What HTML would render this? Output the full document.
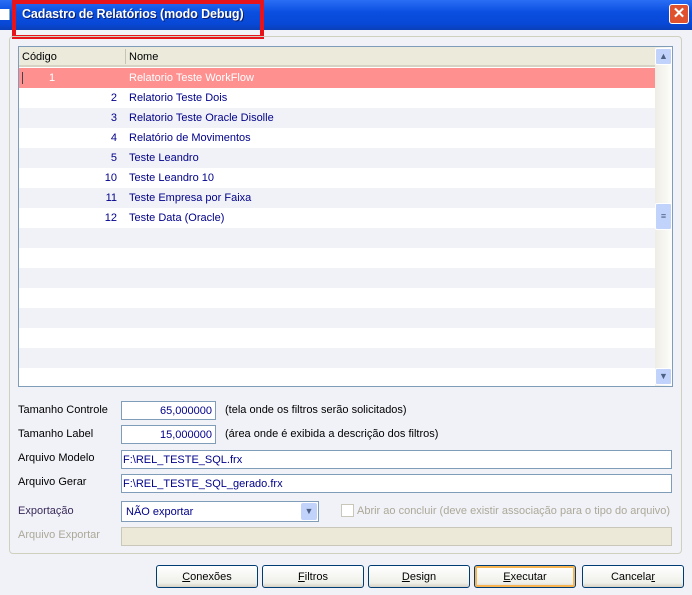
<!DOCTYPE html>
<html><head><meta charset="utf-8"><style>
*{box-sizing:border-box;margin:0;padding:0}
body{width:692px;height:595px;background:#f1f2f7;font-family:"Liberation Sans",sans-serif;font-size:11px;position:relative;overflow:hidden;color:#000;white-space:nowrap}
.abs{position:absolute}
#tb{left:0;top:0;width:692px;height:30px;background:linear-gradient(#2a6ef5,#0a4fe0 40%,#0848d6 80%,#0a3fb8);}
#red{left:12px;top:0;width:252px;height:39px;border:4px solid #e8141c}
#close{left:669px;top:4px;width:20px;height:20px;background:#e0522e;border:1px solid #fff;border-radius:3px;color:#fff;font-size:15px;line-height:18px;text-align:center;font-weight:bold}
#grp{left:9px;top:36px;width:673px;height:518px;border:1px solid #d0d0bf;border-radius:4px}
#list{left:18px;top:46px;width:655px;height:341px;border:1px solid #7f9db9;background:#fff;overflow:hidden}
.hdr{left:0;top:0;width:636px;height:20px;background:#ebeadb;border-bottom:2px solid #d6d3c4}
.row{left:0;width:636px;height:20px;color:#00008a;line-height:20px}
.row .c{position:absolute;right:538px}
.row .n{position:absolute;left:110px}
#sb{left:636px;top:0;width:17px;height:339px;background:linear-gradient(90deg,#eeede5,#fdfdfa)}
.sbtn{left:0;width:17px;height:17px;background:#c2d3fb;border:1px solid #fff;border-radius:2px;color:#4d6185;font-size:9px;text-align:center;line-height:15px}
.inp{position:absolute;height:19px;border:1px solid #7f9db9;background:#fff;color:#00008a;padding:3px 3px 0;line-height:13px}
.lbl{position:absolute;left:18px}
.btn{position:absolute;top:565px;width:102px;height:23px;border:1px solid #003c74;border-radius:3px;background:linear-gradient(#fff,#f0f0ea 80%,#d6d0c5);text-align:center;line-height:22px}
</style></head><body>
<div id="tb" class="abs"><div class="abs" style="left:0;top:9px;width:10px;height:11px;background:#fff;border-right:1px solid #8aa"></div></div>
<div id="close" class="abs">✕</div>
<div id="red" class="abs"></div>
<div class="abs" style="left:22px;top:7px;color:#fff;font-weight:bold;font-size:12.5px;letter-spacing:-0.1px;text-shadow:1px 1px #0a1f6a">Cadastro de Relatórios (modo Debug)</div>
<div id="grp" class="abs"></div>
<div id="list" class="abs">
 <div class="abs hdr"><span class="abs" style="left:3px;top:4px">Código</span><span class="abs" style="left:106px;top:2px;width:1px;height:15px;background:#c7c5b2"></span><span class="abs" style="left:110px;top:4px">Nome</span></div>
 <div class="abs row" style="top:21px;background:#ff9090;color:#fff"><span class="abs" style="left:3px;top:4px;width:1px;height:12px;background:#444"></span><span class="abs" style="left:30px">1</span><span class="n">Relatorio Teste WorkFlow</span></div>
 <div class="abs row" style="top:41px"><span class="c">2</span><span class="n">Relatorio Teste Dois</span></div>
 <div class="abs row" style="top:61px;background:#f1f2f8"><span class="c">3</span><span class="n">Relatorio Teste Oracle Disolle</span></div>
 <div class="abs row" style="top:81px"><span class="c">4</span><span class="n">Relatório de Movimentos</span></div>
 <div class="abs row" style="top:101px;background:#f1f2f8"><span class="c">5</span><span class="n">Teste Leandro</span></div>
 <div class="abs row" style="top:121px"><span class="c">10</span><span class="n">Teste Leandro 10</span></div>
 <div class="abs row" style="top:141px;background:#f1f2f8"><span class="c">11</span><span class="n">Teste Empresa por Faixa</span></div>
 <div class="abs row" style="top:161px"><span class="c">12</span><span class="n">Teste Data (Oracle)</span></div>
 <div class="abs row" style="top:181px;background:#f1f2f8"></div>
 <div class="abs row" style="top:201px"></div>
 <div class="abs row" style="top:221px;background:#f1f2f8"></div>
 <div class="abs row" style="top:241px"></div>
 <div class="abs row" style="top:261px;background:#f1f2f8"></div>
 <div class="abs row" style="top:281px"></div>
 <div class="abs row" style="top:301px;background:#f1f2f8"></div>
 <div class="abs row" style="top:321px"></div>
 <div id="sb" class="abs">
  <div class="abs sbtn" style="top:1px">▲</div>
  <div class="abs sbtn" style="top:156px;height:27px;line-height:24px">≡</div>
  <div class="abs sbtn" style="top:321px">▼</div>
 </div>
</div>
<span class="lbl" style="top:404px">Tamanho Controle</span>
<div class="inp" style="left:121px;top:401px;width:95px;text-align:right">65,000000</div>
<span class="abs" style="left:225px;top:404px">(tela onde os filtros serão solicitados)</span>
<span class="lbl" style="top:428px">Tamanho Label</span>
<div class="inp" style="left:121px;top:425px;width:95px;text-align:right">15,000000</div>
<span class="abs" style="left:225px;top:428px">(área onde é exibida a descrição dos filtros)</span>
<span class="lbl" style="top:452px">Arquivo Modelo</span>
<div class="inp" style="left:121px;top:450px;width:551px;padding-left:1px">F:\REL_TESTE_SQL.frx</div>
<span class="lbl" style="top:476px">Arquivo Gerar</span>
<div class="inp" style="left:121px;top:474px;width:551px;padding-left:1px">F:\REL_TESTE_SQL_gerado.frx</div>
<span class="lbl" style="top:505px;color:#3a2a5a">Exportação</span>
<div class="inp" style="left:121px;top:501px;width:198px;height:21px;padding-left:4px;padding-top:4px">NÃO exportar<div class="abs" style="right:1px;top:1px;width:16px;height:17px;background:#c2d3fb;border-radius:2px;color:#4d6185;font-size:9px;text-align:center;line-height:17px">▼</div></div>
<div class="abs" style="left:341px;top:504px;width:13px;height:13px;border:1px solid #c9c7ba;background:#fff"></div>
<span class="abs" style="left:357px;top:505px;color:#aca899">Abrir ao concluir (deve existir associação para o tipo do arquivo)</span>
<span class="lbl" style="top:529px;color:#aca899">Arquivo Exportar</span>
<div class="inp" style="left:121px;top:527px;width:551px;background:#ece9d8;border-color:#c9c7ba"></div>
<div class="btn" style="left:156px"><u>C</u>onexões</div>
<div class="btn" style="left:262px"><u>F</u>iltros</div>
<div class="btn" style="left:368px"><u>D</u>esign</div>
<div class="btn" style="left:474px;box-shadow:inset 0 0 0 2px #f8b450"><u>E</u>xecutar</div>
<div class="btn" style="left:582px">Cancela<u>r</u></div>
</body></html>
